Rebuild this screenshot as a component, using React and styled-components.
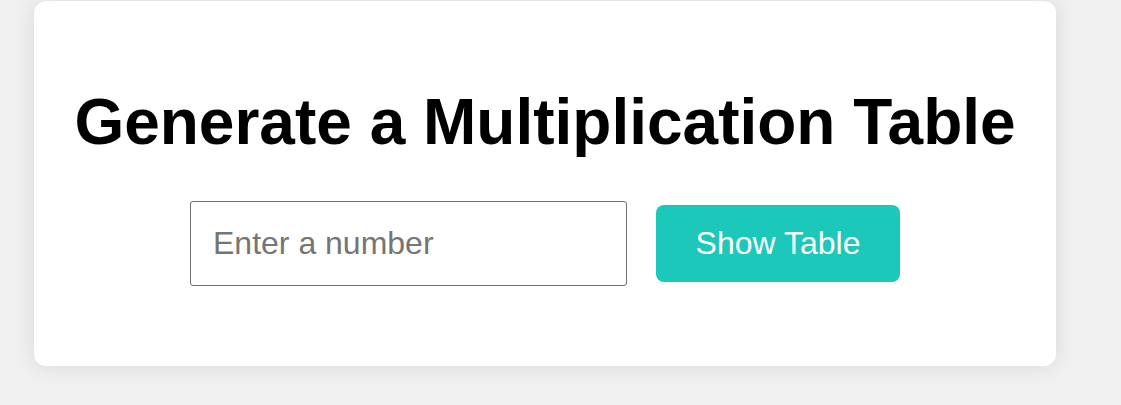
import React from "react";
import styled, { createGlobalStyle } from "styled-components";

const GlobalStyle = createGlobalStyle`
  html, body {
    margin: 0;
    padding: 0;
    background: #f0f0f0;
    font-family: "Liberation Sans", Arial, sans-serif;
  }
`;

const Page = styled.div`
  padding: 1px 0 0 34px;
  min-height: 405px;
  box-sizing: border-box;
`;

const Card = styled.div`
  width: 1022px;
  height: 365px;
  box-sizing: border-box;
  background: #fff;
  border-radius: 12px;
  box-shadow: 0 0 20px rgba(0, 0, 0, 0.1);
  padding: 84px 0 0;
  display: flex;
  flex-direction: column;
  align-items: center;
  gap: 42px;
`;

const Title = styled.h1`
  margin: 0;
  font-size: 64px;
  line-height: 74px;
  font-weight: bold;
  color: #000;
`;

const Form = styled.div`
  display: flex;
  justify-content: center;
  align-items: center;
  gap: 29px;
`;

const NumberInput = styled.input`
  width: 437px;
  height: 85px;
  box-sizing: border-box;
  padding: 0 22px;
  border: 1px solid #6f6f6f;
  border-radius: 3px;
  font-family: inherit;
  font-size: 32px;
  color: #000;
  outline: none;
  &::placeholder {
    color: #757575;
  }
`;

const Button = styled.button`
  width: 244px;
  height: 77px;
  border: none;
  border-radius: 8px;
  background: #1cc8ba;
  color: #fff;
  font-family: inherit;
  font-size: 32px;
  cursor: pointer;
`;

const App = () => {
  return (
    <Page>
      <GlobalStyle />
      <Card>
        <Title>Generate a Multiplication Table</Title>
        <Form>
          <NumberInput type="number" placeholder="Enter a number" />
          <Button>Show Table</Button>
        </Form>
      </Card>
    </Page>
  );
};

export default App;
